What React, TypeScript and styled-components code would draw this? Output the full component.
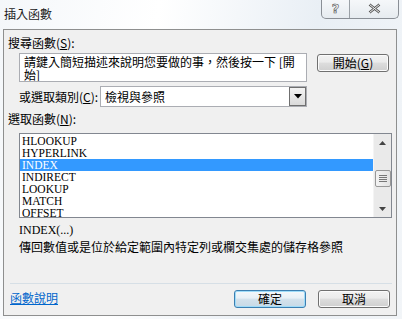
import React from "react";
import styled, { createGlobalStyle } from "styled-components";

const GlobalStyle = createGlobalStyle`
  html, body {
    margin: 0;
    padding: 0;
    background: #eef3f8;
  }
  body {
    font-family: "Noto Sans CJK TC", "Liberation Sans", sans-serif;
    font-size: 12px;
    color: #000;
  }
`;

const functions = ["HLOOKUP", "HYPERLINK", "INDEX", "INDIRECT", "LOOKUP", "MATCH", "OFFSET"];

function App() {
  return (
    <>
      <GlobalStyle />
      <Window>
        <TitleBar>
          <Title>插入函數</Title>
          <CaptionButtons>
            <CaptionBtn $w={27}>?</CaptionBtn>
            <CaptionBtn $w={48} $last>
              <svg width="13" height="11" viewBox="0 0 13 11">
                <path
                  d="M1.5 1.5 L11.5 9.5 M11.5 1.5 L1.5 9.5"
                  stroke="#555"
                  strokeWidth="2.6"
                  fill="none"
                />
                <path
                  d="M1.5 1.5 L11.5 9.5 M11.5 1.5 L1.5 9.5"
                  stroke="#f4f4f4"
                  strokeWidth="1"
                  fill="none"
                />
              </svg>
            </CaptionBtn>
          </CaptionButtons>
        </TitleBar>
        <Client>
          <SectionLabel>
            搜尋函數(<u>S</u>):
          </SectionLabel>
          <SearchRow>
            <SearchBox>
              <SearchLine>請鍵入簡短描述來說明您要做的事，然後按一下 [開</SearchLine>
              <SearchLine>始]</SearchLine>
            </SearchBox>
            <PushButton>
              開始(<u>G</u>)
            </PushButton>
          </SearchRow>
          <CategoryRow>
            <CategoryLabel>
              或選取類別(<u>C</u>):
            </CategoryLabel>
            <Combo>
              <ComboText>檢視與參照</ComboText>
              <ComboArrow>
                <svg width="8" height="5" viewBox="0 0 8 5">
                  <path d="M0 0 H8 L4 4.5 Z" fill="#000" />
                </svg>
              </ComboArrow>
            </Combo>
          </CategoryRow>
          <SectionLabel $top={5}>
            選取函數(<u>N</u>):
          </SectionLabel>
          <ListBox>
            <Items>
              {functions.map((f) => (
                <Item key={f} $selected={f === "INDEX"}>
                  {f}
                </Item>
              ))}
            </Items>
            <ScrollBar>
              <ScrollArrow>
                <svg width="7" height="4" viewBox="0 0 7 4">
                  <path d="M0 4 H7 L3.5 0 Z" fill="#444" />
                </svg>
              </ScrollArrow>
              <Thumb>
                <svg width="8" height="7" viewBox="0 0 8 7">
                  <path d="M0 0.5 H8 M0 2.5 H8 M0 4.5 H8 M0 6.5 H8" stroke="#777" strokeWidth="1" />
                </svg>
              </Thumb>
              <ScrollArrow $bottom>
                <svg width="7" height="4" viewBox="0 0 7 4">
                  <path d="M0 0 H7 L3.5 4 Z" fill="#444" />
                </svg>
              </ScrollArrow>
            </ScrollBar>
          </ListBox>
          <Syntax>INDEX(...)</Syntax>
          <Description>傳回數值或是位於給定範圍內特定列或欄交集處的儲存格參照</Description>
          <Spacer />
          <Separator />
          <Footer>
            <HelpLink href="#">函數說明</HelpLink>
            <FooterButtons>
              <PushButton $default>確定</PushButton>
              <PushButton>取消</PushButton>
            </FooterButtons>
          </Footer>
        </Client>
      </Window>
    </>
  );
}

export default App;

const Window = styled.div`
  width: 402px;
  height: 319px;
  display: flex;
  flex-direction: column;
  background: linear-gradient(100deg, #f4f7fa 0%, #ffffff 35%, #e9eff5 70%, #f2f5f8 100%);
  overflow: hidden;
`;

const TitleBar = styled.div`
  height: 29px;
  display: flex;
  justify-content: space-between;
  align-items: flex-start;
  padding: 0 4px 0 4px;
  box-sizing: border-box;
`;

const Title = styled.div`
  margin-top: 6px;
  font-size: 12px;
  line-height: 16px;
  color: #1a1a1a;
`;

const CaptionButtons = styled.div`
  display: flex;
  margin-top: -1px;
  margin-right: -1px;
  height: 19px;
  border: 1px solid #8a8f96;
  border-top: none;
  border-radius: 0 0 5px 5px;
  overflow: hidden;
  background: linear-gradient(#f6f8fa, #e6ebf0);
`;

const CaptionBtn = styled.div<{ $w: number; $last?: boolean }>`
  width: ${({ $w }) => $w}px;
  display: flex;
  align-items: center;
  justify-content: center;
  font-family: "DejaVu Sans", sans-serif;
  font-size: 13px;
  font-weight: bold;
  color: #f5f5f5;
  -webkit-text-stroke: 0.6px #555;
  border-right: ${({ $last }) => ($last ? "none" : "1px solid #9aa0a6")};
`;

const Client = styled.div`
  flex: 1;
  margin: 0 5px 3px 3px;
  border: 1px solid #8e8f8f;
  background: #f0f0f0;
  display: flex;
  flex-direction: column;
  padding: 0 4px 0 4px;
`;

const SectionLabel = styled.div<{ $top?: number }>`
  margin-top: ${({ $top }) => $top ?? 6}px;
  line-height: 14px;
  font-size: 12px;
`;

const SearchRow = styled.div`
  display: flex;
  align-items: flex-start;
  gap: 10px;
  margin-top: 3px;
  padding-left: 11px;
`;

const SearchBox = styled.div`
  width: 288px;
  height: 29px;
  box-sizing: border-box;
  border: 1px solid #abadb3;
  background: #fff;
  padding: 1px 4px 0 4px;
  font-size: 12px;
  white-space: nowrap;
  overflow: hidden;
`;

const SearchLine = styled.div`
  height: 13px;
  line-height: 13px;
`;

const PushButton = styled.button<{ $default?: boolean }>`
  width: 72px;
  height: 18px;
  padding: 0;
  box-sizing: border-box;
  border: 1px solid ${({ $default }) => ($default ? "#3c7fb1" : "#707070")};
  border-radius: 3px;
  font-family: "Noto Sans CJK TC", "Liberation Sans", sans-serif;
  font-size: 12px;
  line-height: 14px;
  color: #000;
  background: ${({ $default }) =>
    $default
      ? "linear-gradient(#f4f8fb 0%, #e8f0f6 45%, #d4e2ec 50%, #c8dae7 100%)"
      : "linear-gradient(#f2f2f2 0%, #ebebeb 45%, #dddddd 50%, #cfcfcf 100%)"};
  box-shadow: inset 0 0 0 1px ${({ $default }) => ($default ? "#9fdcf9" : "#fbfbfb")};
  margin-top: 1px;
`;

const CategoryRow = styled.div`
  display: flex;
  align-items: center;
  margin-top: 4px;
  padding-left: 11px;
`;

const CategoryLabel = styled.div`
  width: 81px;
  line-height: 14px;
`;

const Combo = styled.div`
  width: 207px;
  height: 21px;
  box-sizing: border-box;
  border: 1px solid #abadb3;
  background: #fff;
  display: flex;
  align-items: center;
  justify-content: space-between;
`;

const ComboText = styled.div`
  padding-left: 4px;
  line-height: 14px;
`;

const ComboArrow = styled.div`
  width: 17px;
  height: 19px;
  box-sizing: border-box;
  border: 1px solid #6f6f6f;
  background: linear-gradient(#f3f3f3, #dadada);
  display: flex;
  align-items: center;
  justify-content: center;
`;

const ListBox = styled.div`
  margin: 7px 0 0 11px;
  width: 373px;
  height: 85px;
  box-sizing: border-box;
  border: 1px solid #828790;
  background: #fff;
  display: flex;
  overflow: hidden;
`;

const Items = styled.div`
  flex: 1;
  padding-top: 1px;
`;

const Item = styled.div<{ $selected?: boolean }>`
  height: 12px;
  line-height: 12px;
  padding-left: 2px;
  font-family: "Liberation Serif", serif;
  font-size: 11.5px;
  background: ${({ $selected }) => ($selected ? "#3399ff" : "transparent")};
  color: ${({ $selected }) => ($selected ? "#fff" : "#000")};
`;

const ScrollBar = styled.div`
  width: 17px;
  background: #eaeaea;
  border-left: 1px solid #f4f4f4;
  display: flex;
  flex-direction: column;
  align-items: center;
`;

const ScrollArrow = styled.div<{ $bottom?: boolean }>`
  height: 17px;
  width: 17px;
  display: flex;
  align-items: center;
  justify-content: center;
  margin-top: ${({ $bottom }) => ($bottom ? "auto" : "0")};
`;

const Thumb = styled.div`
  margin-top: 19px;
  width: 16px;
  height: 17px;
  box-sizing: border-box;
  border: 1px solid #989898;
  border-radius: 2px;
  background: linear-gradient(90deg, #f3f3f3, #e2e2e2);
  display: flex;
  align-items: center;
  justify-content: center;
`;

const Syntax = styled.div`
  margin: 6px 0 0 11px;
  font-family: "Liberation Serif", serif;
  font-size: 12px;
  line-height: 13px;
`;

const Description = styled.div`
  margin: 3px 0 0 11px;
  line-height: 14px;
`;

const Spacer = styled.div`
  flex: 1;
`;

const Separator = styled.div`
  height: 1px;
  margin: 0 0 0 2px;
  background: #d6dfe6;
`;

const Footer = styled.div`
  display: flex;
  align-items: flex-start;
  justify-content: space-between;
  height: 31px;
  padding-left: 2px;
  padding-top: 5px;
  box-sizing: border-box;
`;

const HelpLink = styled.a`
  color: #0066cc;
  text-decoration: underline;
  line-height: 14px;
  margin-top: 2px;
`;

const FooterButtons = styled.div`
  display: flex;
  gap: 12px;
  margin-right: 2px;
`;
